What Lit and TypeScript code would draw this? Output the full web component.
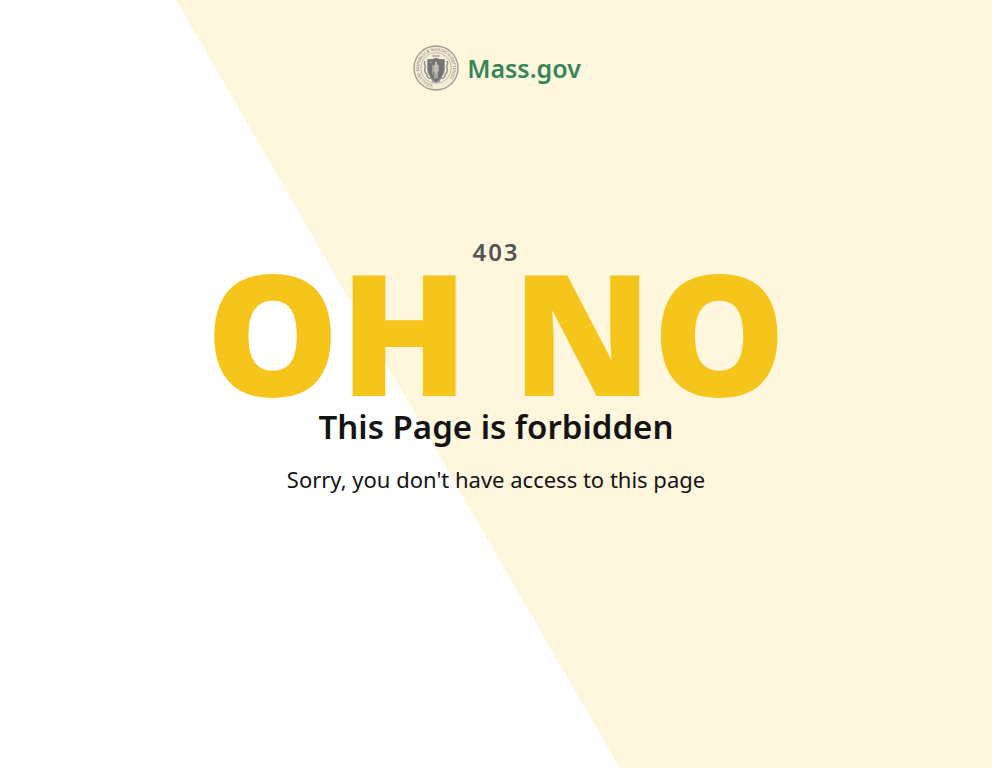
import { LitElement, html, css } from "lit";
import { customElement } from "lit/decorators.js";

@customElement("state-seal")
export class StateSeal extends LitElement {
  static styles = css`
    :host {
      display: block;
      width: 46px;
      height: 46px;
    }
    svg {
      display: block;
      width: 100%;
      height: 100%;
    }
    .ring {
      fill: none;
      stroke: #a39f95;
    }
    .field {
      fill: #f6edd8;
    }
    .motto {
      font-family: "Noto Sans", sans-serif;
      font-size: 12px;
      font-weight: 600;
      fill: #9a968c;
    }
    .ribbon {
      fill: none;
      stroke: #8d8b85;
      stroke-width: 4;
    }
    .crest {
      fill: #a09c92;
    }
    .shield {
      fill: #737373;
    }
    .figure {
      fill: #c2bdb0;
    }
  `;

  render() {
    return html`
      <svg viewBox="0 0 138 138" role="img" aria-label="Massachusetts state seal">
        <defs>
          <path id="rim" d="M60 119 A51 51 0 1 1 78 119" />
        </defs>
        <circle class="field" cx="69" cy="69" r="66" />
        <circle class="ring" cx="69" cy="69" r="66" stroke-width="4" />
        <circle class="ring" cx="69" cy="69" r="46" stroke-width="2" />
        <text class="motto">
          <textPath href="#rim">SIGILLUM REIPUBLICÆ MASSACHUSETTENSIS</textPath>
        </text>
        <path class="crest" d="M58 31h22v4H58z" />
        <path
          class="ribbon"
          d="M38 49q-6 2-3 10q4 6 0 15q-1 9 7 14q-3 8 8 12q7-3 9 8q10 5 20 0q2-11 9-8q11-4 8-12q8-5 7-14q-4-9 0-15q3-8-3-10"
        />
        <path
          class="shield"
          d="M43 42q13 3 26-4q13 7 26 4v27c0 19-11 33-26 43c-15-10-26-24-26-43z"
        />
        <path
          class="figure"
          d="M66 50h6v7l5 4v18l-3 1v20h-4V86h-2v15h-4V81l-3-1V62l5-4z"
        />
        <path class="figure" d="M52 50h3v5h-3zM57 61h2v28h-2z" />
      </svg>
    `;
  }
}

@customElement("app-root")
export class AppRoot extends LitElement {
  static styles = css`
    :host {
      display: block;
      min-height: 100vh;
      background: linear-gradient(
        60deg,
        #ffffff calc(50% - 85px),
        #fef6dd calc(50% - 85px)
      );
      color: #141414;
      font-family: "Noto Sans", sans-serif;
      text-align: center;
    }
    header {
      display: flex;
      justify-content: center;
      padding: 45px 0 0 2px;
    }
    .brand {
      display: flex;
      align-items: center;
      gap: 8px;
      color: #388557;
      font-size: 25px;
      font-weight: 600;
      line-height: 46px;
      text-decoration: none;
    }
    main {
      display: flex;
      flex-direction: column;
      align-items: center;
      padding-top: 143px;
    }
    h1 {
      margin: 0;
      display: flex;
      flex-direction: column;
      align-items: center;
    }
    .code {
      color: #535353;
      font-size: 24px;
      font-weight: 600;
      line-height: 36px;
      letter-spacing: 2px;
    }
    .shout {
      color: #f6c51b;
      font-size: 168px;
      font-weight: 900;
      line-height: 122px;
    }
    h2 {
      margin: 11px 0 0;
      font-size: 33px;
      font-weight: 600;
      line-height: 48px;
    }
    p {
      margin: 12px 0 0;
      font-size: 22px;
      line-height: 32px;
    }
  `;

  render() {
    return html`
      <header>
        <a class="brand" href="/"><state-seal></state-seal>Mass.gov</a>
      </header>
      <main>
        <h1>
          <span class="code">403</span>
          <span class="shout">OH NO</span>
        </h1>
        <h2>This Page is forbidden</h2>
        <p>Sorry, you don't have access to this page</p>
      </main>
    `;
  }
}
